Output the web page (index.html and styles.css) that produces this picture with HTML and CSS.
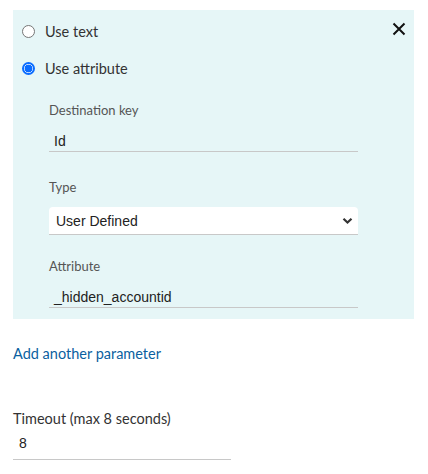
FILE: index.html
```html
<!DOCTYPE html>
<html>
<head>
<meta charset="utf-8">
<link rel="stylesheet" href="styles.css">
</head>
<body>
<div class="page">
  <div class="panel">
    <button class="close" aria-label="Close">
      <svg width="14" height="14" viewBox="0 0 14 14"><path d="M1.5 1.5 L12.5 12.5 M12.5 1.5 L1.5 12.5" stroke="#111" stroke-width="2" fill="none"/></svg>
    </button>
    <label class="radio-row">
      <span class="radio"></span>
      <span class="radio-label">Use text</span>
    </label>
    <label class="radio-row">
      <span class="radio checked"></span>
      <span class="radio-label">Use attribute</span>
    </label>
    <div class="fields">
      <div class="field">
        <div class="label">Destination key</div>
        <div class="input">Id</div>
      </div>
      <div class="field field-select">
        <div class="label">Type</div>
        <div class="select">
          <span>User Defined</span>
          <svg width="11" height="8" viewBox="0 0 11 8"><path d="M1.5 1.8 L5.5 5.6 L9.5 1.8" stroke="#333" stroke-width="2.2" fill="none"/></svg>
        </div>
      </div>
      <div class="field">
        <div class="label">Attribute</div>
        <div class="input">_hidden_accountid</div>
      </div>
    </div>
  </div>
  <a class="link" href="#">Add another parameter</a>
  <div class="timeout">
    <div class="label dark">Timeout (max 8 seconds)</div>
    <div class="input short">8</div>
  </div>
</div>
</body>
</html>
```

FILE: styles.css
```css
* { box-sizing: border-box; }
body {
  margin: 0;
  background: #fff;
  font-family: Lato, "Open Sans", sans-serif;
  color: #333;
}
.page {
  padding: 10px 15px 0 13px;
}
.panel {
  position: relative;
  background: #e6f6f7;
  width: 401px;
  padding: 12px 56px 11px 9px;
}
.close {
  position: absolute;
  top: 9px;
  right: 5px;
  width: 20px;
  height: 20px;
  border: 0;
  padding: 0;
  background: transparent;
  display: flex;
  align-items: center;
  justify-content: center;
}
.radio-row {
  display: flex;
  align-items: center;
  height: 18px;
  margin-bottom: 19px;
}
.radio {
  width: 13px;
  height: 13px;
  border-radius: 50%;
  border: 1px solid #767676;
  background: #fff;
  margin-right: 10px;
  flex: none;
}
.radio.checked {
  border: 2px solid #0a6cff;
  background: radial-gradient(circle, #0a6cff 0 3.6px, #fff 4.2px);
}
.radio-label {
  font-size: 14.5px;
  color: #333;
}
.fields {
  padding-left: 27px;
  margin-top: 25px;
}
.field {
  margin-bottom: 27px;
}
.field.field-select { margin-bottom: 23px; }
.field:last-child { margin-bottom: 0; }
.label {
  font-size: 13px;
  color: #555;
  line-height: 16px;
  margin-bottom: 12px;
}
.input {
  font-family: "Liberation Sans", Arial, sans-serif;
  font-size: 14px;
  color: #222;
  line-height: 18px;
  padding: 2px 0 1px 5px;
  border-bottom: 1px solid #c8c8c8;
}
.select {
  display: flex;
  align-items: center;
  justify-content: space-between;
  height: 28px;
  background: #fff;
  border-radius: 4px 4px 0 0;
  border-bottom: 1px solid #c8c8c8;
  padding: 0 5px 0 7px;
  font-family: "Liberation Sans", Arial, sans-serif;
  font-size: 14px;
  color: #222;
}
.link {
  display: block;
  margin-top: 26px;
  font-size: 14.5px;
  color: #0a5fa0;
  text-decoration: none;
  line-height: 18px;
}
.timeout {
  margin-top: 48px;
  width: 218px;
}
.label.dark {
  color: #333;
  font-size: 14.5px;
  margin-bottom: 5px;
}
.input.short {
  padding: 2px 0 7px 6px;
}
```
